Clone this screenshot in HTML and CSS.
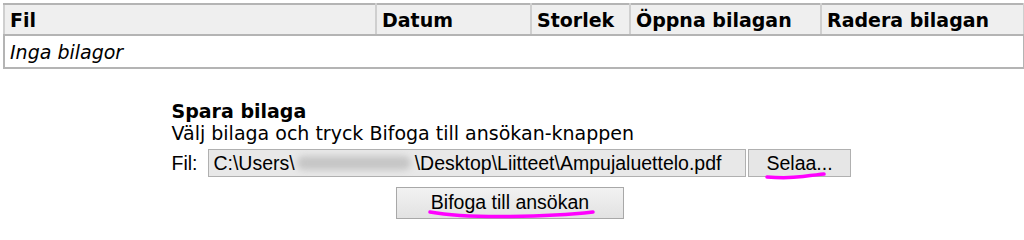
FILE: index.html
```html
<!DOCTYPE html>
<html>
<head>
<meta charset="utf-8">
<link rel="stylesheet" href="styles.css">
</head>
<body>
<table class="att">
  <thead>
    <tr>
      <th class="c-fil">Fil</th>
      <th class="c-dat">Datum</th>
      <th class="c-sto">Storlek</th>
      <th class="c-opp">Öppna bilagan</th>
      <th class="c-rad">Radera bilagan</th>
    </tr>
  </thead>
  <tbody>
    <tr><td colspan="5" class="empty">Inga bilagor</td></tr>
  </tbody>
</table>

<div class="save">
  <div class="save-inner">
    <div class="title">Spara bilaga</div>
    <div class="hint">Välj bilaga och tryck Bifoga till ansökan-knappen</div>
    <div class="filerow">
      <span class="label">Fil:</span>
      <div class="path">C:\Users\<span class="blur"></span>\Desktop\Liitteet\Ampujaluettelo.pdf</div>
      <div class="browse"><span class="mark">Selaa...</span>
        <svg class="scribble s1" width="62" height="9" viewBox="0 0 62 9"><path d="M2 6 Q 22 7.5 38 5.5 T 59 3" stroke="#ff00ff" stroke-width="3.5" fill="none" stroke-linecap="round"/></svg>
      </div>
    </div>
    <div class="submitrow">
      <div class="submit"><span class="mark">Bifoga till ansökan</span>
        <svg class="scribble s2" width="168" height="11" viewBox="0 0 168 11"><path d="M2 3 Q 30 8 80 7.5 T 165 3" stroke="#ff00ff" stroke-width="3.5" fill="none" stroke-linecap="round"/></svg>
      </div>
    </div>
  </div>
</div>
</body>
</html>
```
FILE: styles.css
```css
html, body { margin: 0; padding: 0; background: #fff; }
body { padding: 3px 0 0 3px; font-family: "DejaVu Sans", Verdana, sans-serif; color: #000; }

.att {
  border-collapse: collapse;
  width: 1015px;
  table-layout: fixed;
  border: 2px solid #b4b4b4;
}
.att th, .att td { padding: 0 0 0 5px; text-align: left; }
.att th {
  background: #efefef;
  font-weight: bold;
  font-size: 19px;
  height: 29px;
  border: 2px solid #cfcfcf;
  border-bottom: 2px solid #b4b4b4;
  border-top: 2px solid #b4b4b4;
}
.c-fil { width: 365px; }
.c-dat { width: 148px; }
.c-sto { width: 92px; }
.c-opp { width: 184px; }
.c-rad { width: 196px; }
.att td.empty {
  font-style: italic;
  font-size: 19px;
  height: 31px;
  background: #fff;
}

.save { display: flex; justify-content: center; margin-top: 31px; }
.save-inner { width: 680px; margin-left: -4px; }
.title { font-weight: bold; font-size: 19px; line-height: 22px; }
.hint { font-size: 19px; line-height: 22px; }

.filerow { display: flex; align-items: center; margin-top: 5px; font-family: "Liberation Sans", Arial, sans-serif; font-size: 19.5px; }
.label { width: 37px; }
.path {
  width: 532px; height: 26px; line-height: 26px;
  background: #e8e8e8; border: 1px solid #b0b0b0;
  padding-left: 4px; white-space: nowrap; overflow: hidden;
  display: flex; align-items: center;
}
.blur { display: inline-block; width: 114px; height: 14px; background: #c6c6c6; filter: blur(3px); border-radius: 7px; margin: 0 4px 0 2px; }
.browse {
  position: relative;
  width: 102px; height: 26px; line-height: 26px; margin-left: 2px;
  background: #e6e6e6; border: 1px solid #b0b0b0; text-align: center;
}
.submitrow { display: flex; justify-content: center; margin-top: 10px; margin-left: -3px; }
.submit {
  position: relative;
  width: 226px; height: 30px; line-height: 29px; text-align: center;
  font-family: "Liberation Sans", Arial, sans-serif; font-size: 19.5px;
  background: linear-gradient(#f2f2f2, #e2e2e2); border: 1px solid #a8a8a8;
}
.scribble { position: absolute; }
.s1 { left: 16px; top: 21px; }
.s2 { left: 31px; top: 21px; }
```
